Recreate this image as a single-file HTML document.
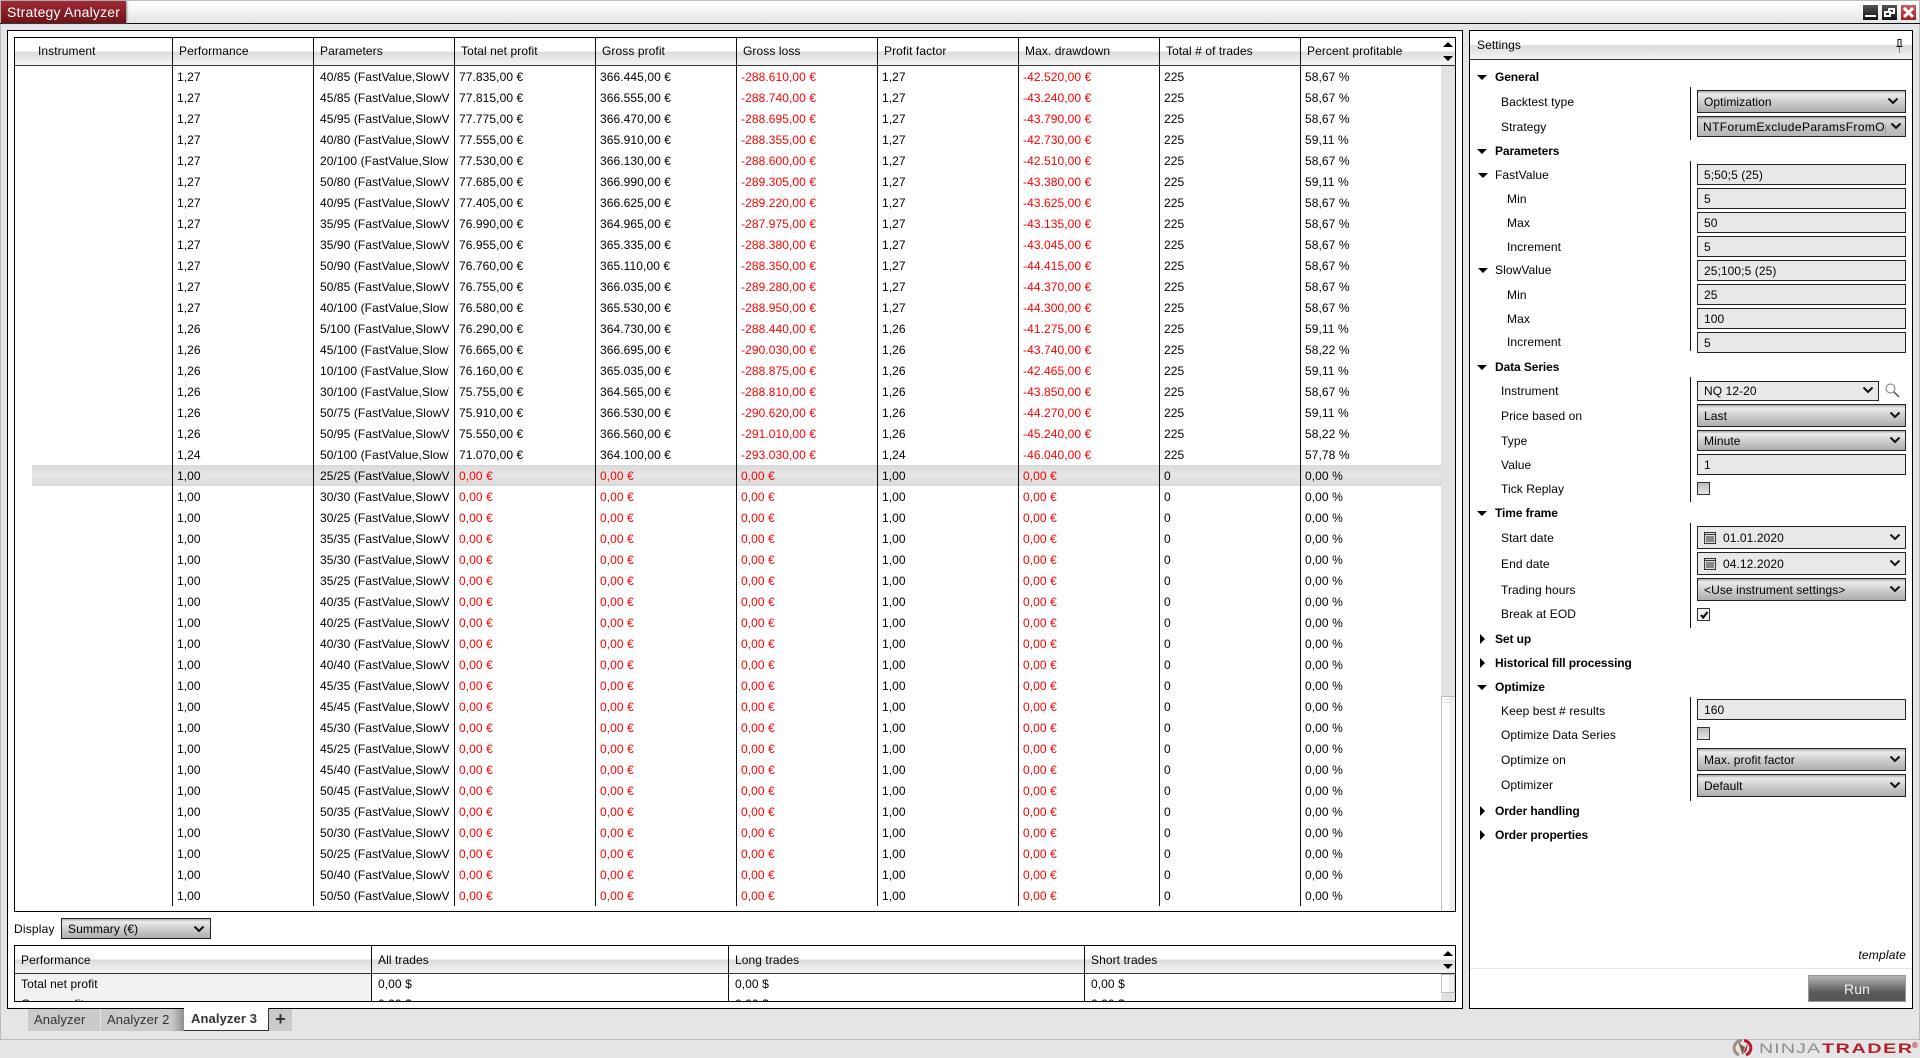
<!DOCTYPE html>
<html><head><meta charset="utf-8"><title>Strategy Analyzer</title>
<style>
html,body{margin:0;padding:0;width:1920px;height:1058px;overflow:hidden;background:#e4e5e6;font:12px "Liberation Sans",Arial,sans-serif;color:#000;letter-spacing:.08px}
div,span,svg{position:absolute;box-sizing:border-box}
.nw{white-space:nowrap}
.panel{background:#fff;border:1px solid #000}
.hdr{background:linear-gradient(#fff 0,#fff 47%,#dcdcdc 53%,#f3f4f4 100%)}
.v{width:1px;background:#111}
.t{line-height:20px;height:20px;white-space:nowrap}
table{position:absolute;left:14px;top:67px;width:1427px;table-layout:fixed;border-collapse:collapse}
td{height:21px;padding:0 0 0 5px;line-height:21px;white-space:nowrap;overflow:hidden;font-size:12px}
td:nth-child(3){padding-left:7px}
td i{display:block;font-style:normal;overflow:hidden;width:129px}
td:nth-child(6),td:nth-child(8){color:#f00}
.z td:nth-child(4),.z td:nth-child(5){color:#f00}
.b{font-weight:bold;letter-spacing:-.1px}
.sel{left:1697px;width:209px;border:1px solid #222;background:linear-gradient(#a8a8a8 0,#ebebeb 14%,#cfcfcf 50%,#adadad 100%);line-height:22px;padding-left:6px;white-space:nowrap;overflow:hidden}
.sel2{background:linear-gradient(#999 0,#d9d9d9 14%,#c6c6c6 50%,#b4b4b4 100%);padding-left:5px}
.fld{left:1697px;width:209px;height:21px;border:1px solid #222;background:#e7e8e8;line-height:20px;padding-left:6px;white-space:nowrap}
.chev{width:12px;height:8px}
.tri{width:0;height:0;border-left:5px solid transparent;border-right:5px solid transparent;border-top:5px solid #000}
.tr{width:0;height:0;border-top:5px solid transparent;border-bottom:5px solid transparent;border-left:5px solid #000}
.cb{left:1697px;width:13px;height:13px;border:1px solid #333;background:linear-gradient(#bbb,#e6e6e6)}
.tab{top:1009px;height:22px;line-height:21px;background:#c9caca;color:#333;font-size:13px;letter-spacing:.1px;text-align:left}
.up{width:0;height:0;border-left:5px solid transparent;border-right:5px solid transparent;border-bottom:5px solid #000}
.dn{width:0;height:0;border-left:5px solid transparent;border-right:5px solid transparent;border-top:5px solid #000}
.wb{top:5px;width:15px;height:15px;background:linear-gradient(#555,#111)}
</style></head><body>
<div style="left:0;top:0;width:1920px;height:1px;background:#bbb"></div>
<div style="left:0;top:0;width:1px;height:1040px;background:#bbb"></div>
<div style="left:1919px;top:0;width:1px;height:1040px;background:#bbb"></div>
<div style="left:0;top:1039px;width:1920px;height:1px;background:#bbb"></div>
<div style="left:1px;top:1px;width:1918px;height:22px;background:linear-gradient(#fff,#e4e5e6)"></div>
<div style="left:0;top:23px;width:1920px;height:1px;background:#111"></div>
<div class="nw" style="left:1px;top:1px;width:125px;height:22px;background:linear-gradient(#a02a35,#6e1219);color:#fff;font-size:14px;line-height:22px;padding-left:6px;letter-spacing:.2px;box-shadow:1px 0 2px #888">Strategy Analyzer</div>
<div class="wb" style="left:1863px"><div style="left:2px;top:10px;width:11px;height:2px;background:#fff"></div></div>
<div class="wb" style="left:1882px"><div style="left:6px;top:3px;width:7px;height:6px;border:2px solid #fff"></div><div style="left:2px;top:6px;width:7px;height:6px;border:2px solid #fff;background:#222"></div></div>
<div class="wb" style="left:1901px;background:linear-gradient(#c96068,#a01c26)"><svg style="left:2px;top:2px" width="11" height="11" viewBox="0 0 11 11"><path d="M1 1L10 10M10 1L1 10" stroke="#fff" stroke-width="3"/></svg></div>

<div class="panel" style="left:7px;top:30px;width:1456px;height:979px"></div>
<div class="panel" style="left:14px;top:37px;width:1442px;height:875px"></div>
<div class="hdr" style="left:15px;top:38px;width:1440px;height:27px"></div>
<div style="left:15px;top:65px;width:1440px;height:1px;background:#333"></div>
<div style="left:1441px;top:66px;width:14px;height:845px;background:#e2e2e2"></div>
<div style="left:1441px;top:696px;width:14px;height:215px;background:linear-gradient(90deg,#fff 0,#fff 50%,#eee 60%,#eee 100%);border:1px solid #bbb;border-bottom:0;border-right:0"></div>
<div style="left:1444px;top:699px;width:9px;height:1px;background:#ddd"></div>
<div style="left:1444px;top:702px;width:9px;height:1px;background:#ddd"></div>
<div class="up" style="left:1443px;top:42px"></div>
<div class="dn" style="left:1443px;top:56px"></div>
<div style="left:32px;top:465px;width:1409px;height:21px;background:linear-gradient(#d9d9d9,#e6e6e6 50%,#d9d9d9)"></div>
<div class="t" style="left:38px;top:41px">Instrument</div>
<div class="t" style="left:179px;top:41px">Performance</div>
<div class="t" style="left:320px;top:41px">Parameters</div>
<div class="t" style="left:461px;top:41px">Total net profit</div>
<div class="t" style="left:602px;top:41px">Gross profit</div>
<div class="t" style="left:743px;top:41px">Gross loss</div>
<div class="t" style="left:884px;top:41px">Profit factor</div>
<div class="t" style="left:1025px;top:41px">Max. drawdown</div>
<div class="t" style="left:1166px;top:41px">Total # of trades</div>
<div class="t" style="left:1307px;top:41px">Percent profitable</div>
<table><colgroup><col style="width:158px"><col style="width:141px"><col style="width:141px"><col style="width:141px"><col style="width:141px"><col style="width:141px"><col style="width:141px"><col style="width:141px"><col style="width:141px"><col style="width:141px"></colgroup><tbody>
<tr><td></td><td>1,27</td><td><i>40/85 (FastValue,SlowValue)</i></td><td>77.835,00 €</td><td>366.445,00 €</td><td>-288.610,00 €</td><td>1,27</td><td>-42.520,00 €</td><td>225</td><td>58,67 %</td></tr>
<tr><td></td><td>1,27</td><td><i>45/85 (FastValue,SlowValue)</i></td><td>77.815,00 €</td><td>366.555,00 €</td><td>-288.740,00 €</td><td>1,27</td><td>-43.240,00 €</td><td>225</td><td>58,67 %</td></tr>
<tr><td></td><td>1,27</td><td><i>45/95 (FastValue,SlowValue)</i></td><td>77.775,00 €</td><td>366.470,00 €</td><td>-288.695,00 €</td><td>1,27</td><td>-43.790,00 €</td><td>225</td><td>58,67 %</td></tr>
<tr><td></td><td>1,27</td><td><i>40/80 (FastValue,SlowValue)</i></td><td>77.555,00 €</td><td>365.910,00 €</td><td>-288.355,00 €</td><td>1,27</td><td>-42.730,00 €</td><td>225</td><td>59,11 %</td></tr>
<tr><td></td><td>1,27</td><td><i>20/100 (FastValue,SlowValue)</i></td><td>77.530,00 €</td><td>366.130,00 €</td><td>-288.600,00 €</td><td>1,27</td><td>-42.510,00 €</td><td>225</td><td>58,67 %</td></tr>
<tr><td></td><td>1,27</td><td><i>50/80 (FastValue,SlowValue)</i></td><td>77.685,00 €</td><td>366.990,00 €</td><td>-289.305,00 €</td><td>1,27</td><td>-43.380,00 €</td><td>225</td><td>59,11 %</td></tr>
<tr><td></td><td>1,27</td><td><i>40/95 (FastValue,SlowValue)</i></td><td>77.405,00 €</td><td>366.625,00 €</td><td>-289.220,00 €</td><td>1,27</td><td>-43.625,00 €</td><td>225</td><td>58,67 %</td></tr>
<tr><td></td><td>1,27</td><td><i>35/95 (FastValue,SlowValue)</i></td><td>76.990,00 €</td><td>364.965,00 €</td><td>-287.975,00 €</td><td>1,27</td><td>-43.135,00 €</td><td>225</td><td>58,67 %</td></tr>
<tr><td></td><td>1,27</td><td><i>35/90 (FastValue,SlowValue)</i></td><td>76.955,00 €</td><td>365.335,00 €</td><td>-288.380,00 €</td><td>1,27</td><td>-43.045,00 €</td><td>225</td><td>58,67 %</td></tr>
<tr><td></td><td>1,27</td><td><i>50/90 (FastValue,SlowValue)</i></td><td>76.760,00 €</td><td>365.110,00 €</td><td>-288.350,00 €</td><td>1,27</td><td>-44.415,00 €</td><td>225</td><td>58,67 %</td></tr>
<tr><td></td><td>1,27</td><td><i>50/85 (FastValue,SlowValue)</i></td><td>76.755,00 €</td><td>366.035,00 €</td><td>-289.280,00 €</td><td>1,27</td><td>-44.370,00 €</td><td>225</td><td>58,67 %</td></tr>
<tr><td></td><td>1,27</td><td><i>40/100 (FastValue,SlowValue)</i></td><td>76.580,00 €</td><td>365.530,00 €</td><td>-288.950,00 €</td><td>1,27</td><td>-44.300,00 €</td><td>225</td><td>58,67 %</td></tr>
<tr><td></td><td>1,26</td><td><i>5/100 (FastValue,SlowValue)</i></td><td>76.290,00 €</td><td>364.730,00 €</td><td>-288.440,00 €</td><td>1,26</td><td>-41.275,00 €</td><td>225</td><td>59,11 %</td></tr>
<tr><td></td><td>1,26</td><td><i>45/100 (FastValue,SlowValue)</i></td><td>76.665,00 €</td><td>366.695,00 €</td><td>-290.030,00 €</td><td>1,26</td><td>-43.740,00 €</td><td>225</td><td>58,22 %</td></tr>
<tr><td></td><td>1,26</td><td><i>10/100 (FastValue,SlowValue)</i></td><td>76.160,00 €</td><td>365.035,00 €</td><td>-288.875,00 €</td><td>1,26</td><td>-42.465,00 €</td><td>225</td><td>59,11 %</td></tr>
<tr><td></td><td>1,26</td><td><i>30/100 (FastValue,SlowValue)</i></td><td>75.755,00 €</td><td>364.565,00 €</td><td>-288.810,00 €</td><td>1,26</td><td>-43.850,00 €</td><td>225</td><td>58,67 %</td></tr>
<tr><td></td><td>1,26</td><td><i>50/75 (FastValue,SlowValue)</i></td><td>75.910,00 €</td><td>366.530,00 €</td><td>-290.620,00 €</td><td>1,26</td><td>-44.270,00 €</td><td>225</td><td>59,11 %</td></tr>
<tr><td></td><td>1,26</td><td><i>50/95 (FastValue,SlowValue)</i></td><td>75.550,00 €</td><td>366.560,00 €</td><td>-291.010,00 €</td><td>1,26</td><td>-45.240,00 €</td><td>225</td><td>58,22 %</td></tr>
<tr><td></td><td>1,24</td><td><i>50/100 (FastValue,SlowValue)</i></td><td>71.070,00 €</td><td>364.100,00 €</td><td>-293.030,00 €</td><td>1,24</td><td>-46.040,00 €</td><td>225</td><td>57,78 %</td></tr>
<tr class="z"><td></td><td>1,00</td><td><i>25/25 (FastValue,SlowValue)</i></td><td>0,00 €</td><td>0,00 €</td><td>0,00 €</td><td>1,00</td><td>0,00 €</td><td>0</td><td>0,00 %</td></tr>
<tr class="z"><td></td><td>1,00</td><td><i>30/30 (FastValue,SlowValue)</i></td><td>0,00 €</td><td>0,00 €</td><td>0,00 €</td><td>1,00</td><td>0,00 €</td><td>0</td><td>0,00 %</td></tr>
<tr class="z"><td></td><td>1,00</td><td><i>30/25 (FastValue,SlowValue)</i></td><td>0,00 €</td><td>0,00 €</td><td>0,00 €</td><td>1,00</td><td>0,00 €</td><td>0</td><td>0,00 %</td></tr>
<tr class="z"><td></td><td>1,00</td><td><i>35/35 (FastValue,SlowValue)</i></td><td>0,00 €</td><td>0,00 €</td><td>0,00 €</td><td>1,00</td><td>0,00 €</td><td>0</td><td>0,00 %</td></tr>
<tr class="z"><td></td><td>1,00</td><td><i>35/30 (FastValue,SlowValue)</i></td><td>0,00 €</td><td>0,00 €</td><td>0,00 €</td><td>1,00</td><td>0,00 €</td><td>0</td><td>0,00 %</td></tr>
<tr class="z"><td></td><td>1,00</td><td><i>35/25 (FastValue,SlowValue)</i></td><td>0,00 €</td><td>0,00 €</td><td>0,00 €</td><td>1,00</td><td>0,00 €</td><td>0</td><td>0,00 %</td></tr>
<tr class="z"><td></td><td>1,00</td><td><i>40/35 (FastValue,SlowValue)</i></td><td>0,00 €</td><td>0,00 €</td><td>0,00 €</td><td>1,00</td><td>0,00 €</td><td>0</td><td>0,00 %</td></tr>
<tr class="z"><td></td><td>1,00</td><td><i>40/25 (FastValue,SlowValue)</i></td><td>0,00 €</td><td>0,00 €</td><td>0,00 €</td><td>1,00</td><td>0,00 €</td><td>0</td><td>0,00 %</td></tr>
<tr class="z"><td></td><td>1,00</td><td><i>40/30 (FastValue,SlowValue)</i></td><td>0,00 €</td><td>0,00 €</td><td>0,00 €</td><td>1,00</td><td>0,00 €</td><td>0</td><td>0,00 %</td></tr>
<tr class="z"><td></td><td>1,00</td><td><i>40/40 (FastValue,SlowValue)</i></td><td>0,00 €</td><td>0,00 €</td><td>0,00 €</td><td>1,00</td><td>0,00 €</td><td>0</td><td>0,00 %</td></tr>
<tr class="z"><td></td><td>1,00</td><td><i>45/35 (FastValue,SlowValue)</i></td><td>0,00 €</td><td>0,00 €</td><td>0,00 €</td><td>1,00</td><td>0,00 €</td><td>0</td><td>0,00 %</td></tr>
<tr class="z"><td></td><td>1,00</td><td><i>45/45 (FastValue,SlowValue)</i></td><td>0,00 €</td><td>0,00 €</td><td>0,00 €</td><td>1,00</td><td>0,00 €</td><td>0</td><td>0,00 %</td></tr>
<tr class="z"><td></td><td>1,00</td><td><i>45/30 (FastValue,SlowValue)</i></td><td>0,00 €</td><td>0,00 €</td><td>0,00 €</td><td>1,00</td><td>0,00 €</td><td>0</td><td>0,00 %</td></tr>
<tr class="z"><td></td><td>1,00</td><td><i>45/25 (FastValue,SlowValue)</i></td><td>0,00 €</td><td>0,00 €</td><td>0,00 €</td><td>1,00</td><td>0,00 €</td><td>0</td><td>0,00 %</td></tr>
<tr class="z"><td></td><td>1,00</td><td><i>45/40 (FastValue,SlowValue)</i></td><td>0,00 €</td><td>0,00 €</td><td>0,00 €</td><td>1,00</td><td>0,00 €</td><td>0</td><td>0,00 %</td></tr>
<tr class="z"><td></td><td>1,00</td><td><i>50/45 (FastValue,SlowValue)</i></td><td>0,00 €</td><td>0,00 €</td><td>0,00 €</td><td>1,00</td><td>0,00 €</td><td>0</td><td>0,00 %</td></tr>
<tr class="z"><td></td><td>1,00</td><td><i>50/35 (FastValue,SlowValue)</i></td><td>0,00 €</td><td>0,00 €</td><td>0,00 €</td><td>1,00</td><td>0,00 €</td><td>0</td><td>0,00 %</td></tr>
<tr class="z"><td></td><td>1,00</td><td><i>50/30 (FastValue,SlowValue)</i></td><td>0,00 €</td><td>0,00 €</td><td>0,00 €</td><td>1,00</td><td>0,00 €</td><td>0</td><td>0,00 %</td></tr>
<tr class="z"><td></td><td>1,00</td><td><i>50/25 (FastValue,SlowValue)</i></td><td>0,00 €</td><td>0,00 €</td><td>0,00 €</td><td>1,00</td><td>0,00 €</td><td>0</td><td>0,00 %</td></tr>
<tr class="z"><td></td><td>1,00</td><td><i>50/40 (FastValue,SlowValue)</i></td><td>0,00 €</td><td>0,00 €</td><td>0,00 €</td><td>1,00</td><td>0,00 €</td><td>0</td><td>0,00 %</td></tr>
<tr class="z"><td></td><td>1,00</td><td><i>50/50 (FastValue,SlowValue)</i></td><td>0,00 €</td><td>0,00 €</td><td>0,00 €</td><td>1,00</td><td>0,00 €</td><td>0</td><td>0,00 %</td></tr>
</tbody></table>
<div class="v" style="left:172px;top:38px;height:868px"></div>
<div class="v" style="left:313px;top:38px;height:868px"></div>
<div class="v" style="left:454px;top:38px;height:868px"></div>
<div class="v" style="left:595px;top:38px;height:868px"></div>
<div class="v" style="left:736px;top:38px;height:868px"></div>
<div class="v" style="left:877px;top:38px;height:868px"></div>
<div class="v" style="left:1018px;top:38px;height:868px"></div>
<div class="v" style="left:1159px;top:38px;height:868px"></div>
<div class="v" style="left:1300px;top:38px;height:868px"></div>

<div class="t" style="left:14px;top:919px;letter-spacing:.2px">Display</div>
<div class="sel" style="left:61px;top:918px;width:150px;height:21px;line-height:20px;padding-left:6px">Summary (€)</div>
<svg class="chev" style="left:193px;top:925px" viewBox="0 0 12 8"><path d="M1.5 1.5L6 6L10.5 1.5" fill="none" stroke="#111" stroke-width="2"/></svg>

<div class="panel" style="left:14px;top:945px;width:1442px;height:57px;overflow:hidden">
<div class="hdr" style="left:0;top:0;width:1440px;height:27px"></div>
<div style="left:0;top:27px;width:1440px;height:1px;background:#333"></div>
<div style="left:0;top:28px;width:356px;height:28px;background:#f0f1f1"></div>
<div style="left:1426px;top:28px;width:14px;height:28px;background:#e2e2e2"></div>
<div style="left:1426px;top:28px;width:14px;height:19px;background:linear-gradient(90deg,#fff 0,#fff 50%,#eee 60%,#eee 100%);border:1px solid #bbb"></div>
<div class="v" style="left:356px;top:0;height:56px"></div>
<div class="v" style="left:713px;top:0;height:56px"></div>
<div class="v" style="left:1069px;top:0;height:56px"></div>
<div class="t" style="left:6px;top:4px">Performance</div>
<div class="t" style="left:363px;top:4px">All trades</div>
<div class="t" style="left:720px;top:4px">Long trades</div>
<div class="t" style="left:1076px;top:4px">Short trades</div>
<div class="t" style="left:6px;top:28px">Total net profit</div>
<div class="t" style="left:363px;top:28px">0,00 $</div>
<div class="t" style="left:720px;top:28px">0,00 $</div>
<div class="t" style="left:1076px;top:28px">0,00 $</div>
<div class="t" style="left:6px;top:48px">Gross profit</div>
<div class="t" style="left:363px;top:48px">0,00 $</div>
<div class="t" style="left:720px;top:48px">0,00 $</div>
<div class="t" style="left:1076px;top:48px">0,00 $</div>
<div class="up" style="left:1428px;top:5px"></div>
<div class="dn" style="left:1428px;top:18px"></div>
</div>

<div class="tab" style="left:28px;width:72px;padding-left:6px">Analyzer</div>
<div class="tab" style="left:101px;width:83px;padding-left:6px;background:linear-gradient(90deg,#c9caca 85%,#8f9090 100%)">Analyzer 2</div>
<div class="tab" style="left:184px;width:85px;height:23px;top:1008px;padding-left:7px;background:#fff;font-weight:bold;border:1px solid #333;border-top:0;border-left:0;line-height:22px">Analyzer 3</div>
<div class="tab" style="left:269px;width:23px;font-size:18px;font-weight:bold;line-height:20px;text-align:center">+</div>

<!-- Settings -->
<div class="panel" style="left:1469px;top:30px;width:444px;height:979px"></div>
<div class="hdr" style="left:1470px;top:31px;width:442px;height:28px"></div>
<div style="left:1470px;top:59px;width:442px;height:1px;background:#333"></div>
<div class="t" style="left:1477px;top:35px">Settings</div>
<svg style="left:1894px;top:38px" width="11" height="15" viewBox="0 0 11 15"><path d="M3.5 1.5H7.5M4 1.5V8M7 1.5V8M2.5 8.5H8.5" fill="none" stroke="#111"/><path d="M5.5 9V15" stroke="#777"/></svg>

<div class="tri" style="left:1477px;top:75px"></div><div class="t b" style="left:1495px;top:67px">General</div>
<div class="t" style="left:1501px;top:92px">Backtest type</div>
<div class="t" style="left:1501px;top:117px">Strategy</div>
<div class="tri" style="left:1477px;top:149px"></div><div class="t b" style="left:1495px;top:141px">Parameters</div>
<div class="tri" style="left:1478px;top:173px"></div><div class="t" style="left:1495px;top:165px">FastValue</div>
<div class="t" style="left:1507px;top:189px">Min</div>
<div class="t" style="left:1507px;top:213px">Max</div>
<div class="t" style="left:1507px;top:237px">Increment</div>
<div class="tri" style="left:1478px;top:268px"></div><div class="t" style="left:1495px;top:260px">SlowValue</div>
<div class="t" style="left:1507px;top:285px">Min</div>
<div class="t" style="left:1507px;top:309px">Max</div>
<div class="t" style="left:1507px;top:332px">Increment</div>
<div class="tri" style="left:1477px;top:365px"></div><div class="t b" style="left:1495px;top:357px">Data Series</div>
<div class="t" style="left:1501px;top:381px">Instrument</div>
<div class="t" style="left:1501px;top:406px">Price based on</div>
<div class="t" style="left:1501px;top:431px">Type</div>
<div class="t" style="left:1501px;top:455px">Value</div>
<div class="t" style="left:1501px;top:479px">Tick Replay</div>
<div class="tri" style="left:1477px;top:511px"></div><div class="t b" style="left:1495px;top:503px">Time frame</div>
<div class="t" style="left:1501px;top:528px">Start date</div>
<div class="t" style="left:1501px;top:554px">End date</div>
<div class="t" style="left:1501px;top:580px">Trading hours</div>
<div class="t" style="left:1501px;top:604px">Break at EOD</div>
<div class="tr" style="left:1480px;top:634px"></div><div class="t b" style="left:1495px;top:629px">Set up</div>
<div class="tr" style="left:1480px;top:658px"></div><div class="t b" style="left:1495px;top:653px">Historical fill processing</div>
<div class="tri" style="left:1477px;top:685px"></div><div class="t b" style="left:1495px;top:677px">Optimize</div>
<div class="t" style="left:1501px;top:701px">Keep best # results</div>
<div class="t" style="left:1501px;top:725px">Optimize Data Series</div>
<div class="t" style="left:1501px;top:750px">Optimize on</div>
<div class="t" style="left:1501px;top:775px">Optimizer</div>
<div class="tr" style="left:1480px;top:806px"></div><div class="t b" style="left:1495px;top:801px">Order handling</div>
<div class="tr" style="left:1480px;top:830px"></div><div class="t b" style="left:1495px;top:825px">Order properties</div>

<div class="v" style="left:1690px;top:87px;height:53px"></div>
<div class="v" style="left:1690px;top:161px;height:190px"></div>
<div class="v" style="left:1690px;top:377px;height:125px"></div>
<div class="v" style="left:1690px;top:523px;height:105px"></div>
<div class="v" style="left:1690px;top:697px;height:104px"></div>

<div class="sel" style="top:90px;height:23px">Optimization</div>
<div class="sel sel2" style="top:116px;height:21px"><div style="left:5px;top:0;width:183px;height:19px;overflow:hidden;line-height:21px;letter-spacing:.4px">NTForumExcludeParamsFromOptimization</div></div>
<div class="fld" style="top:164px">5;50;5 (25)</div>
<div class="fld" style="top:188px">5</div>
<div class="fld" style="top:212px">50</div>
<div class="fld" style="top:236px">5</div>
<div class="fld" style="top:260px">25;100;5 (25)</div>
<div class="fld" style="top:284px">25</div>
<div class="fld" style="top:308px">100</div>
<div class="fld" style="top:332px">5</div>
<div class="fld" style="top:381px;width:182px;height:20px;line-height:18px">NQ 12-20</div>
<svg style="left:1884px;top:382px" width="16" height="16" viewBox="0 0 16 16"><circle cx="6.5" cy="6.5" r="4.5" fill="none" stroke="#777"/><path d="M10 10L15 15" stroke="#555" stroke-width="1.5"/></svg>
<div class="sel" style="top:404px;height:23px">Last</div>
<div class="sel" style="top:430px;height:21px;line-height:20px">Minute</div>
<div class="fld" style="top:454px">1</div>
<div class="cb" style="top:482px"></div>
<div class="fld" style="top:526px;height:23px;line-height:22px;padding-left:25px">01.01.2020</div>
<div class="fld" style="top:552px;height:23px;line-height:22px;padding-left:25px">04.12.2020</div>
<svg style="left:1704px;top:532px" width="12" height="12" viewBox="0 0 12 12"><rect x=".5" y=".5" width="11" height="11" fill="#ddd" stroke="#333"/><path d="M1 2.5H11M2 5H10M2 7H10M2 9H10" stroke="#333"/></svg>
<svg style="left:1704px;top:558px" width="12" height="12" viewBox="0 0 12 12"><rect x=".5" y=".5" width="11" height="11" fill="#ddd" stroke="#333"/><path d="M1 2.5H11M2 5H10M2 7H10M2 9H10" stroke="#333"/></svg>
<div class="sel" style="top:578px;height:23px">&lt;Use instrument settings&gt;</div>
<div class="cb" style="top:608px;background:#eee"><svg style="left:1px;top:1px" width="10" height="10" viewBox="0 0 10 10"><path d="M2 5L4.2 7.5L8.5 2" fill="none" stroke="#111" stroke-width="2.2"/></svg></div>
<div class="fld" style="top:699px">160</div>
<div class="cb" style="top:727px"></div>
<div class="sel" style="top:748px;height:23px">Max. profit factor</div>
<div class="sel" style="top:774px;height:23px">Default</div>

<svg class="chev" style="left:1887px;top:97px" viewBox="0 0 12 8"><path d="M1.5 1.5L6 6L10.5 1.5" fill="none" stroke="#111" stroke-width="2"/></svg>
<svg class="chev" style="left:1890px;top:122px" viewBox="0 0 12 8"><path d="M1.5 1.5L6 6L10.5 1.5" fill="none" stroke="#111" stroke-width="2"/></svg>
<svg class="chev" style="left:1862px;top:386px" viewBox="0 0 12 8"><path d="M1.5 1.5L6 6L10.5 1.5" fill="none" stroke="#111" stroke-width="2"/></svg>
<svg class="chev" style="left:1889px;top:411px" viewBox="0 0 12 8"><path d="M1.5 1.5L6 6L10.5 1.5" fill="none" stroke="#111" stroke-width="2"/></svg>
<svg class="chev" style="left:1889px;top:436px" viewBox="0 0 12 8"><path d="M1.5 1.5L6 6L10.5 1.5" fill="none" stroke="#111" stroke-width="2"/></svg>
<svg class="chev" style="left:1889px;top:533px" viewBox="0 0 12 8"><path d="M1.5 1.5L6 6L10.5 1.5" fill="none" stroke="#111" stroke-width="2"/></svg>
<svg class="chev" style="left:1889px;top:559px" viewBox="0 0 12 8"><path d="M1.5 1.5L6 6L10.5 1.5" fill="none" stroke="#111" stroke-width="2"/></svg>
<svg class="chev" style="left:1889px;top:585px" viewBox="0 0 12 8"><path d="M1.5 1.5L6 6L10.5 1.5" fill="none" stroke="#111" stroke-width="2"/></svg>
<svg class="chev" style="left:1889px;top:755px" viewBox="0 0 12 8"><path d="M1.5 1.5L6 6L10.5 1.5" fill="none" stroke="#111" stroke-width="2"/></svg>
<svg class="chev" style="left:1889px;top:781px" viewBox="0 0 12 8"><path d="M1.5 1.5L6 6L10.5 1.5" fill="none" stroke="#111" stroke-width="2"/></svg>

<div class="t" style="right:14px;top:945px;font-style:italic;letter-spacing:.2px">template</div>
<div style="left:1470px;top:968px;width:442px;height:1px;background:#e4e5e6"></div>
<div style="left:1808px;top:975px;width:98px;height:27px;border:1px solid #999;background:linear-gradient(#b5b5b5,#5a5a5a 65%,#555);color:#eee;font-size:14px;line-height:26px;text-align:center">Run</div>

<!-- logo -->
<svg style="left:1731px;top:1039px" width="23" height="18" viewBox="0 0 23 18"><path d="M11 1.5A7.5 7.5 0 0 0 8 16" fill="none" stroke="#a08f80" stroke-width="3"/><path d="M13 1.5A7.5 7.5 0 0 1 15 16" fill="none" stroke="#b3202a" stroke-width="3"/><path d="M7 2L11.5 16L14 8L10.5 6Z" fill="#7d5f4c"/><path d="M12 15L17 3L15.5 12Z" fill="#b3202a"/></svg>
<div class="nw" style="left:1759px;top:1039px;height:18px;line-height:18px;font-size:14px;color:#8d8d8d;letter-spacing:.8px;transform:scaleX(1.4);transform-origin:0 50%">NINJA</div>
<div class="nw" style="left:1822px;top:1039px;height:18px;line-height:18px;font-size:14px;font-weight:bold;color:#b3202a;letter-spacing:1.2px;transform:scaleX(1.4);transform-origin:0 50%">TRADER</div>
<div class="nw" style="left:1912px;top:1041px;height:10px;line-height:10px;font-size:8px;font-weight:bold;color:#b3202a">®</div>
</body></html>
